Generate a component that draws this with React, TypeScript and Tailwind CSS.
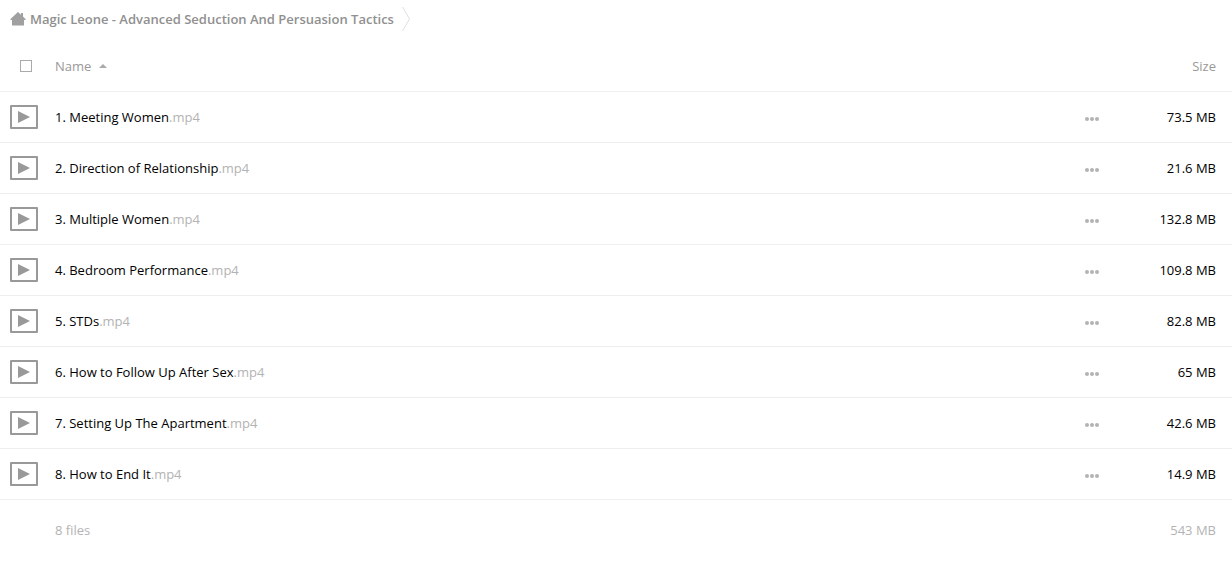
const files = [
  { name: "1. Meeting Women", size: "73.5 MB" },
  { name: "2. Direction of Relationship", size: "21.6 MB" },
  { name: "3. Multiple Women", size: "132.8 MB" },
  { name: "4. Bedroom Performance", size: "109.8 MB" },
  { name: "5. STDs", size: "82.8 MB" },
  { name: "6. How to Follow Up After Sex", size: "65 MB" },
  { name: "7. Setting Up The Apartment", size: "42.6 MB" },
  { name: "8. How to End It", size: "14.9 MB" },
];

function HomeIcon() {
  return (
    <svg width="16" height="14" viewBox="0 0 16 14" fill="#a0a0a0" aria-hidden="true">
      <path d="M8 0 L11 2.7 V1 H13 V4.5 L15.5 7 V8 H14 V13.5 H2 V8 H0.5 V7 Z" />
    </svg>
  );
}

function VideoIcon() {
  return (
    <svg className="block" width="28" height="24" viewBox="0 0 28 24" aria-hidden="true">
      <rect x="1" y="1" width="26" height="22" fill="#fff" stroke="#999" strokeWidth="2" strokeLinejoin="round" />
      <path d="M8 6 L20 12 L8 18 Z" fill="#999" />
    </svg>
  );
}

function DotsIcon() {
  return (
    <svg className="block" width="14" height="4" viewBox="0 0 14 4" fill="#b3b3b3" aria-hidden="true">
      <circle cx="2" cy="2" r="2" />
      <circle cx="7" cy="2" r="2" />
      <circle cx="12" cy="2" r="2" />
    </svg>
  );
}

export default function App() {
  return (
    <main className="bg-white font-['Open_Sans',sans-serif] text-[13px] leading-5 text-black">
      <nav aria-label="Breadcrumb" className="mb-1 flex h-[38px] items-center pl-2.5">
        <a href="#" className="flex items-center gap-1 font-semibold text-[#909090]">
          <HomeIcon />
          Magic Leone - Advanced Seduction And Persuasion Tactics
        </a>
        <svg className="ml-2" width="8" height="24" viewBox="0 0 8 24" fill="none" stroke="#e0e0e0" aria-hidden="true">
          <path d="M0.5 0 L7.5 12 L0.5 24" />
        </svg>
      </nav>
      <table className="w-full table-fixed border-collapse">
        <colgroup>
          <col className="w-[55px]" />
          <col />
          <col className="w-10" />
          <col className="w-[120px]" />
        </colgroup>
        <thead>
          <tr className="h-[49px] border-b border-[#eee] text-[#999]">
            <th className="pl-5">
              <input type="checkbox" aria-label="Select all" className="block size-3 appearance-none border border-[#aaa] bg-white" />
            </th>
            <th className="text-left font-normal">
              <button type="button" className="flex items-center gap-2">
                Name
                <svg width="8" height="4" viewBox="0 0 8 4" fill="#aaa" aria-hidden="true">
                  <path d="M4 0 L8 4 H0 Z" />
                </svg>
              </button>
            </th>
            <th />
            <th className="pr-4 text-right font-normal">Size</th>
          </tr>
        </thead>
        <tbody>
          {files.map((file) => (
            <tr key={file.name} className="h-[51px] border-b border-[#eee]">
              <td className="pl-2.5">
                <VideoIcon />
              </td>
              <td>
                <a href="#">
                  {file.name}
                  <span className="text-[#b3b3b3]">.mp4</span>
                </a>
              </td>
              <td>
                <button type="button" aria-label={`Actions for ${file.name}`} className="mx-auto block pt-1">
                  <DotsIcon />
                </button>
              </td>
              <td className="pr-4 text-right">{file.size}</td>
            </tr>
          ))}
        </tbody>
        <tfoot>
          <tr className="h-[62px] text-[#b3b3b3]">
            <td />
            <td>{files.length} files</td>
            <td />
            <td className="pr-4 text-right">543 MB</td>
          </tr>
        </tfoot>
      </table>
    </main>
  );
}
